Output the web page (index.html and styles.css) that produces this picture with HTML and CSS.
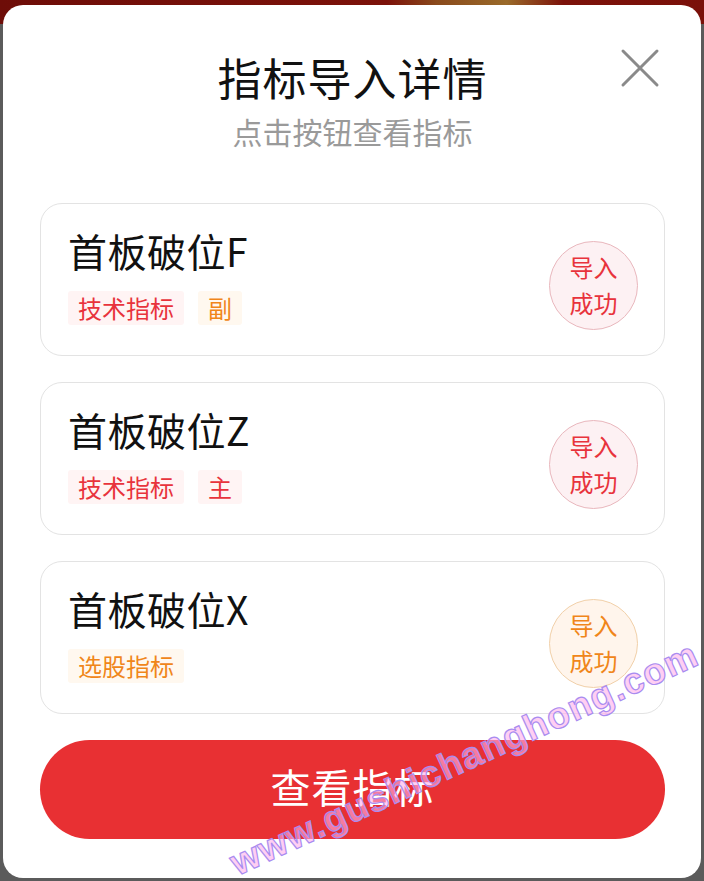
FILE: index.html
```html
<!DOCTYPE html>
<html lang="zh">
<head>
<meta charset="utf-8">
<title>指标导入详情</title>
<link rel="stylesheet" href="styles.css">
</head>
<body>
<div class="backdrop-top"></div>
<div class="modal">
  <button class="close" aria-label="关闭">
    <svg width="40" height="40" viewBox="0 0 40 40"><path d="M3 3 L37 37 M37 3 L3 37" stroke="#8a8a8a" stroke-width="3" fill="none" stroke-linecap="round"/></svg>
  </button>
  <h1 class="title">指标导入详情</h1>
  <p class="subtitle">点击按钮查看指标</p>
  <div class="list">
    <div class="card">
      <div class="info">
        <div class="name">首板破位F</div>
        <div class="tags">
          <span class="tag tag-red">技术指标</span>
          <span class="tag tag-orange">副</span>
        </div>
      </div>
      <div class="badge badge-red">导入<br>成功</div>
    </div>
    <div class="card">
      <div class="info">
        <div class="name">首板破位Z</div>
        <div class="tags">
          <span class="tag tag-red">技术指标</span>
          <span class="tag tag-red">主</span>
        </div>
      </div>
      <div class="badge badge-red">导入<br>成功</div>
    </div>
    <div class="card">
      <div class="info">
        <div class="name">首板破位X</div>
        <div class="tags">
          <span class="tag tag-orange">选股指标</span>
        </div>
      </div>
      <div class="badge badge-orange">导入<br>成功</div>
    </div>
  </div>
  <button class="primary">查看指标</button>
</div>
<div class="watermark">www.gushichanghong.com</div>
</body>
</html>
```
FILE: styles.css
```css
html, body {
  margin: 0;
  padding: 0;
}
body {
  width: 704px;
  height: 881px;
  background: #5b5b5b;
  overflow: hidden;
  position: relative;
  font-family: "Noto Sans CJK SC", "Noto Sans", sans-serif;
}
.backdrop-top {
  position: absolute;
  left: 0;
  top: 0;
  width: 704px;
  height: 24px;
  background: linear-gradient(90deg, #6e0d08 0%, #7c120a 55%, #8a4a1c 62%, #9a6a2a 72%, #7c120a 80%, #7a1009 100%);
}
.modal {
  position: relative;
  margin: 5px 3px 0 3px;
  width: 698px;
  height: 873px;
  box-sizing: border-box;
  background: #ffffff;
  border-radius: 20px;
  padding: 46px 36px 0 37px;
  display: flex;
  flex-direction: column;
  align-items: stretch;
}
.close {
  position: absolute;
  right: 41px;
  top: 43px;
  width: 40px;
  height: 40px;
  padding: 0;
  border: 0;
  background: transparent;
}
.close svg {
  display: block;
}
.title {
  margin: 0;
  font-size: 44px;
  line-height: 52px;
  font-weight: 400;
  color: #111111;
  text-align: center;
  letter-spacing: 1px;
}
.subtitle {
  margin: 10px 0 0 0;
  font-size: 30px;
  line-height: 36px;
  color: #9a9a9a;
  text-align: center;
}
.list {
  margin-top: 54px;
  display: flex;
  flex-direction: column;
  gap: 26px;
}
.card {
  height: 153px;
  box-sizing: border-box;
  border: 1px solid #e3e3e3;
  border-radius: 22px;
  padding: 23px 26px 28px 27px;
  display: flex;
  justify-content: space-between;
  align-items: center;
}
.info {
  display: flex;
  flex-direction: column;
  align-self: flex-start;
}
.name {
  font-size: 39px;
  line-height: 46px;
  color: #111111;
  letter-spacing: 0.5px;
}
.tags {
  margin-top: 18px;
  display: flex;
  gap: 14px;
}
.tag {
  display: inline-block;
  height: 34px;
  line-height: 34px;
  font-size: 24px;
  padding: 0 10px;
  border-radius: 3px;
}
.tag-red {
  color: #e8333c;
  background: #fff4f4;
}
.tag-orange {
  color: #f0861a;
  background: #fff8ef;
}
.badge {
  width: 89px;
  height: 89px;
  box-sizing: border-box;
  border-radius: 50%;
  margin-top: 16px;
  font-size: 24px;
  line-height: 36px;
  text-align: center;
  display: flex;
  align-items: center;
  justify-content: center;
}
.badge-red {
  color: #e8333c;
  border: 1px solid #e9b7bd;
  background: #fdf1f3;
}
.badge-orange {
  color: #f0861a;
  border: 1px solid #f1d0a9;
  background: #fff5ec;
}
.primary {
  margin-top: 26px;
  height: 99px;
  border: 0;
  border-radius: 50px;
  background: #e83033;
  color: #ffffff;
  font-family: "Noto Sans CJK SC", "Noto Sans", sans-serif;
  font-size: 40px;
  letter-spacing: 1px;
  padding: 0 0 8px 0;
}
.watermark {
  position: absolute;
  left: 237px;
  top: 846px;
  font-family: "Liberation Sans", Arial, sans-serif;
  font-weight: 700;
  font-size: 37px;
  line-height: 36px;
  letter-spacing: 1.4px;
  white-space: nowrap;
  color: rgba(255, 175, 235, 0.6);
  -webkit-text-stroke: 1.2px #a98cf0;
  transform-origin: 0 29px;
  transform: rotate(-24.6deg);
  pointer-events: none;
}
```
